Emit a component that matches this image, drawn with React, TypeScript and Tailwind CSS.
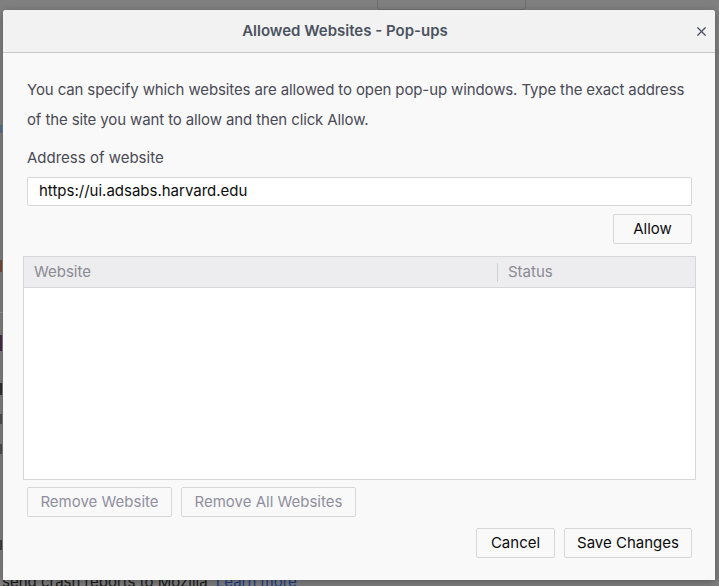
import { X } from "lucide-react";

const font = { fontFamily: "Inter, 'Open Sans', sans-serif" };

function Btn({ label, disabled, className }: { label: string; disabled?: boolean; className?: string }) {
  return (
    <button
      className={
        "h-[30px] whitespace-nowrap rounded-[2px] border border-[#d7d7db] bg-[#f9f9fa] text-[15px] " +
        (disabled ? "text-[#8f8f9d]" : "text-[#0c0c0d]") +
        " " +
        (className ?? "")
      }
    >
      {label}
    </button>
  );
}

export default function App() {
  return (
    <div className="relative h-[586px] w-[719px] overflow-hidden bg-[#808080]" style={font}>
      {/* Page underneath (dimmed) */}
      <div className="absolute left-[377px] top-[-4px] h-[14px] w-[149px] rounded-[3px] border border-[#6e6e6e]" />
      <div className="absolute left-0 top-[125px] h-[8px] w-[2px] bg-[#5a6f90]" />
      <div className="absolute left-0 top-[260px] h-[12px] w-[2px] bg-[#7a4a3a]" />
      <div className="absolute left-0 top-[312px] h-[1px] w-[3px] bg-[#9a9a9a]" />
      <div className="absolute left-0 top-[335px] h-[16px] w-[2px] bg-[#4a2a4a]" />
      <div className="absolute left-0 top-[383px] h-[12px] w-[2px] bg-[#303030]" />
      <div className="absolute left-0 top-[414px] h-[10px] w-[2px] bg-[#505050]" />
      <div className="absolute left-0 top-[444px] h-[10px] w-[2px] bg-[#505050]" />
      <div className="absolute left-0 top-[540px] h-[10px] w-[2px] bg-[#404040]" />
      <div className="absolute left-[2px] top-[573px] whitespace-nowrap text-[15px] leading-[18px] text-[#1a1a1a]">
        send crash reports to Mozilla <span className="ml-[4px] text-[#1a3f8f]">Learn more</span>
      </div>

      {/* Dialog */}
      <div className="relative ml-[3px] mt-[10px] flex h-[570px] w-[712px] flex-col overflow-hidden rounded-t-[3px] bg-[#f9f9fa] shadow-[0_2px_8px_rgba(0,0,0,0.3)]">
        <div className="relative flex h-[43px] shrink-0 items-center justify-center border-b border-[#c8c8cc] bg-[#f2f2f2] pr-[28px]">
          <span className="text-[15px] font-semibold text-[#4a5260]">Allowed Websites - Pop-ups</span>
          <X className="absolute right-[6px] top-[14px] h-[15px] w-[15px] text-[#4a5260]" strokeWidth={2} />
        </div>

        <div className="flex flex-1 flex-col pl-[24px] pr-[23px] pt-[22px]">
          <p className="text-[15px] leading-[30px] tracking-[-0.12px] text-[#4a4a55]">
            You can specify which websites are allowed to open pop-up windows. Type the exact address of the site you
            want to allow and then click Allow.
          </p>
          <div className="mt-[12px] text-[15px] leading-[22px] text-[#4a4a55]">Address of website</div>
          <div className="mt-[8px] flex h-[29px] items-center rounded-[2px] border border-[#d7d7db] bg-white px-[11px] text-[15px] text-[#0c0c0d]">
            https://ui.adsabs.harvard.edu
          </div>
          <div className="mt-[8px] flex justify-end">
            <Btn label="Allow" className="w-[79px]" />
          </div>

          <div className="-mx-[4px] mt-[12px] flex h-[224px] flex-col border border-[#d7d7db] bg-white">
            <div className="flex h-[31px] shrink-0 items-center border-b border-[#d7d7db] bg-[#ededf0] text-[15px] text-[#8a8a90]">
              <div className="flex h-[19px] w-[474px] items-center border-r border-[#d0d0d4] pl-[10px]">Website</div>
              <div className="pl-[10px]">Status</div>
            </div>
          </div>

          <div className="mt-[7px] flex gap-[9px]">
            <Btn label="Remove Website" disabled className="w-[145px]" />
            <Btn label="Remove All Websites" disabled className="w-[175px]" />
          </div>

          <div className="mt-[11px] flex justify-end gap-[9px]">
            <Btn label="Cancel" className="w-[79px]" />
            <Btn label="Save Changes" className="w-[128px]" />
          </div>
        </div>
      </div>
    </div>
  );
}
